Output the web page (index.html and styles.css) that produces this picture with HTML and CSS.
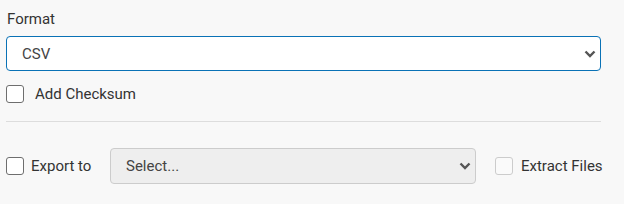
FILE: index.html
```html
<!DOCTYPE html>
<html lang="en">
<head>
    <meta charset="UTF-8">
    <title>Export options</title>
    <link rel="stylesheet" href="styles.css">
</head>
<body>
    <div class="panel">
        <label class="field-label" for="format">Format</label>
        <div class="select-wrap">
            <select id="format" class="select select-active">
                <option>CSV</option>
            </select>
            <svg class="chevron" width="12" height="8" viewBox="0 0 12 8"><path d="M1.5 1.5 L6 6 L10.5 1.5" fill="none" stroke="#555" stroke-width="2.4"/></svg>
        </div>

        <label class="check-row">
            <input type="checkbox" class="check">
            <span>Add Checksum</span>
        </label>

        <hr class="divider">

        <div class="export-row">
            <label class="check-row inline export-label">
                <input type="checkbox" class="check">
                <span>Export to</span>
            </label>
            <div class="select-wrap export-select">
                <select class="select select-disabled" disabled>
                    <option>Select...</option>
                </select>
                <svg class="chevron" width="12" height="8" viewBox="0 0 12 8"><path d="M1.5 1.5 L6 6 L10.5 1.5" fill="none" stroke="#555" stroke-width="2.4"/></svg>
            </div>
            <label class="check-row inline">
                <input type="checkbox" class="check" disabled>
                <span>Extract Files</span>
            </label>
        </div>
    </div>
</body>
</html>
```

FILE: styles.css
```css
body {
    margin: 0;
    background: #f8f8f8;
    font-family: Roboto, "Liberation Sans", sans-serif;
    font-size: 15px;
    color: #333;
}

.panel {
    padding: 9px 23px 0 6px;
}

.field-label {
    display: block;
    line-height: 20px;
    margin: 0 0 7px 1px;
}

.select-wrap {
    position: relative;
}

.select {
    appearance: none;
    -webkit-appearance: none;
    width: 100%;
    height: 35px;
    padding: 0 30px 0 15px;
    font-family: inherit;
    font-size: 15px;
    color: #444;
    border-radius: 4px;
    margin: 0;
    display: block;
}

.select-active {
    background: #fff;
    border: 1px solid #0a72b6;
}

.select-disabled {
    background: #eee;
    border: 1px solid #ccc;
    height: 36px;
    opacity: 1;
    color: #444;
}

.chevron {
    position: absolute;
    right: 5px;
    top: 14px;
    pointer-events: none;
}

.check-row {
    display: flex;
    align-items: center;
    gap: 11px;
    margin-top: 14px;
    line-height: 18px;
    white-space: nowrap;
}

.check {
    appearance: none;
    -webkit-appearance: none;
    width: 18px;
    height: 18px;
    margin: 0;
    border: 1.5px solid #6e6e6e;
    border-radius: 3px;
    background: #fff;
    flex-shrink: 0;
}

.check:disabled {
    border-color: #ccc;
    background: #fafafa;
}

.divider {
    border: none;
    border-top: 1px solid #ddd;
    margin: 18px 0 0 0;
}

.export-row {
    display: flex;
    align-items: center;
    margin-top: 26px;
}

.export-row > * {
    flex-shrink: 0;
}

.check-row.inline {
    margin-top: 0;
    gap: 7px;
}

.check-row.inline:last-child {
    gap: 8px;
}

.export-label {
    width: 84px;
    margin-top: -2px;
}

.export-select {
    width: 366px;
    margin: 0 19px 0 20px;
}

.export-select .chevron {
    right: 5px;
    top: 14px;
}
```
